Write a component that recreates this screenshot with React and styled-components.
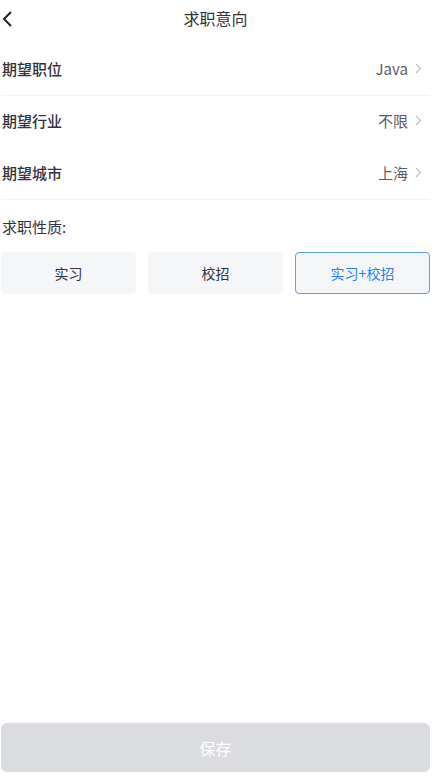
import React from 'react';
import styled, { createGlobalStyle } from 'styled-components';

const GlobalStyle = createGlobalStyle`
  html, body {
    margin: 0;
    padding: 0;
    background: #fff;
  }
  body {
    font-family: "Noto Sans CJK SC", "Noto Sans", sans-serif;
    color: #333;
  }
`

const Page = styled.div`
  display: flex;
  flex-direction: column;
  min-height: 100vh;
  box-sizing: border-box;
  padding: 0 12px 9px 1px;
`

const Header = styled.div`
  position: relative;
  height: 44px;
  display: flex;
  align-items: flex-start;
  justify-content: center;
`

const BackButton = styled.div`
  position: absolute;
  left: 0;
  top: 9px;
  width: 14px;
  height: 18px;
`

const Title = styled.div`
  margin-top: 6px;
  font-size: 16px;
  line-height: 24px;
  color: #33333d;
`

const Row = styled.div`
  height: 52px;
  box-sizing: border-box;
  display: flex;
  align-items: center;
  justify-content: space-between;
  padding: 0 8px 3px 0;
  border-bottom: ${props => (props.divider ? '1px solid #f3f3f5' : 'none')};
`

const RowLabel = styled.div`
  font-size: 15px;
  font-weight: 500;
  color: #33333d;
  padding-left: 1px;
`

const RowValue = styled.div`
  display: flex;
  align-items: center;
  gap: 7px;
  font-size: 15px;
  color: #5c5c66;
`

const Section = styled.div`
  padding-top: 17px;
`

const SectionLabel = styled.div`
  font-size: 15px;
  line-height: 20px;
  color: #33333d;
  padding-left: 1px;
`

const Options = styled.div`
  display: grid;
  grid-template-columns: repeat(3, 1fr);
  gap: 12px;
  margin-top: 15px;
`

const Option = styled.div`
  height: 42px;
  box-sizing: border-box;
  display: flex;
  align-items: center;
  justify-content: center;
  border-radius: 4px;
  background: #f5f6f8;
  border: 1px solid ${props => (props.active ? '#5c9ef7' : '#f5f6f8')};
  font-size: 14px;
  color: ${props => (props.active ? '#2c7ef2' : '#33333d')};
`

const Spacer = styled.div`
  flex: 1;
`

const SaveButton = styled.div`
  height: 49px;
  border-radius: 6px;
  background: #dbdcdf;
  color: #fff;
  font-size: 16px;
  display: flex;
  align-items: center;
  justify-content: center;
`

const Chevron = () => (
  <svg width="7" height="11" viewBox="0 0 7 11">
    <polyline points="1,1 5.5,5.5 1,10" fill="none" stroke="#c2c2ca" strokeWidth="1.2" />
  </svg>
);

const rows = [
  { label: '期望职位', value: 'Java', divider: true },
  { label: '期望行业', value: '不限', divider: false },
  { label: '期望城市', value: '上海', divider: true },
];

const types = ['实习', '校招', '实习+校招'];

const App = () => {
  const [selected, setSelected] = React.useState('实习+校招');

  return (
    <Page>
      <GlobalStyle />
      <Header>
        <BackButton>
          <svg width="14" height="18" viewBox="0 0 14 18">
            <polyline points="10,2 3,9 10,16" fill="none" stroke="#222" strokeWidth="2" />
          </svg>
        </BackButton>
        <Title>求职意向</Title>
      </Header>

      {rows.map(item => (
        <Row key={item.label} divider={item.divider}>
          <RowLabel>{item.label}</RowLabel>
          <RowValue>
            {item.value}
            <Chevron />
          </RowValue>
        </Row>
      ))}

      <Section>
        <SectionLabel>求职性质:</SectionLabel>
        <Options>
          {types.map(t => (
            <Option key={t} active={selected === t} onClick={() => setSelected(t)}>
              {t}
            </Option>
          ))}
        </Options>
      </Section>

      <Spacer />
      <SaveButton>保存</SaveButton>
    </Page>
  );
}

export default App;
